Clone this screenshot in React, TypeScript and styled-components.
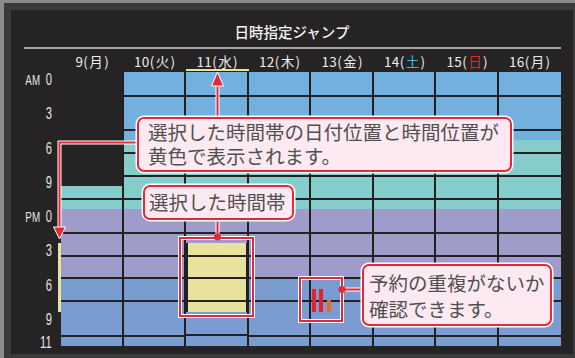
import styled, { createGlobalStyle } from 'styled-components';

const HOUR = 274 / 24;
const LINES = [2, 5, 7, 9, 11, 14, 16, 18, 20, 23];
const SELECTED = 2;

const RED = '#e5283a';
const BLUE = '#72b0df';
const TEAL = '#84cdca';
const PURPLE = '#9f9ccb';
const NAVY = '#7a9cd0';
const YELLOW = '#e9e29d';
const DARK = '#252324';

const days = [
  { day: '9', week: '月' },
  { day: '10', week: '火' },
  { day: '11', week: '水' },
  { day: '12', week: '木' },
  { day: '13', week: '金' },
  { day: '14', week: '土', tone: '#45b6e8' },
  { day: '15', week: '日', tone: '#e3232b' },
  { day: '16', week: '月' },
];

const labels = [
  { h: 0, ampm: 'AM', n: '0' },
  { h: 3, n: '3' },
  { h: 6, n: '6' },
  { h: 9, n: '9' },
  { h: 12, ampm: 'PM', n: '0' },
  { h: 15, n: '3' },
  { h: 18, n: '6' },
  { h: 21, n: '9' },
  { h: 23, n: '11' },
];

type Seg = { from: number; to: number; color: string; line: boolean; selected: boolean };

const bandColor = (h: number) => (h < 6 ? BLUE : h < 12 ? TEAL : h < 18 ? PURPLE : NAVY);

// 列ごとに色の境目と番組の区切り線で分割する
const segmentsFor = (col: number): Seg[] => {
  const cuts = new Set([0, 6, 12, 18, 24, ...LINES]);
  if (col === 0) cuts.add(10);
  if (col === SELECTED) {
    cuts.add(15);
    cuts.add(21);
  }
  const sorted = [...cuts].sort((a, b) => a - b);
  const segs: Seg[] = [];
  for (let i = 0; i < sorted.length - 1; i++) {
    const from = sorted[i];
    const past = col === 0 && from < 10;
    const selected = col === SELECTED && from >= 15 && from < 21;
    segs.push({
      from,
      to: sorted[i + 1],
      color: past ? DARK : selected ? YELLOW : bandColor(from),
      line: !past && LINES.includes(from),
      selected,
    });
  }
  return segs;
};

const App = () => {
  return (
    <Screen>
      <GlobalStyle />
      <Frame>
        <Panel>
          <Title>日時指定ジャンプ</Title>
          <TitleRule />
          <DateRow>
            {days.map((d, i) => (
              <DateCell key={d.day} $selected={i === SELECTED}>
                {d.day}(<Week $tone={d.tone}>{d.week}</Week>)
              </DateCell>
            ))}
          </DateRow>
          <Body>
            <LabelColumn>
              {labels.map((l, i) => {
                const next = labels[i + 1] ? labels[i + 1].h : 24;
                return (
                  <TimeLabel key={l.h} $hours={next - l.h}>
                    <TimeText>
                      {l.ampm && <AmPm>{l.ampm}</AmPm>}
                      {l.n}
                    </TimeText>
                  </TimeLabel>
                );
              })}
            </LabelColumn>
            <Rail>
              <RailGap $hours={15} />
              <RailMark $hours={6} />
            </Rail>
            <Grid>
              {days.map((d, i) => (
                <Column key={d.day} $last={i === days.length - 1}>
                  {segmentsFor(i).map(s => (
                    <Segment
                      key={s.from}
                      $hours={s.to - s.from}
                      $color={s.color}
                      $line={s.line}
                      $selected={s.selected}
                    />
                  ))}
                </Column>
              ))}
            </Grid>
          </Body>
        </Panel>
      </Frame>

      <SelectionBox />
      <IconBox>
        <svg width="40" height="41" viewBox="0 0 40 41">
          <rect x="11" y="10" width="4" height="23" fill="#e8202a" />
          <rect x="18" y="10" width="4" height="23" fill="#e8202a" />
          <rect x="26" y="21" width="4" height="12" fill="#f26522" />
        </svg>
      </IconBox>

      <Arrows width="575" height="358" viewBox="0 0 575 358">
        <g fill="none" stroke="#fff" strokeWidth="4" strokeLinejoin="miter">
          <path d="M217.5 118 V84" />
          <path d="M138 142.5 H59.5 V228" />
          <path d="M217.5 219 V236" />
          <path d="M343 289.5 H363" />
        </g>
        <g fill="none" stroke={RED} strokeWidth="2" strokeLinejoin="miter">
          <path d="M217.5 118 V84" />
          <path d="M138 142.5 H59.5 V228" />
          <path d="M217.5 219 V236" />
          <path d="M343 289.5 H363" />
        </g>
        <polygon points="211.5,86 223.5,86 217.5,72" fill={RED} stroke="#fff" strokeWidth="1" />
        <polygon points="53.5,227 65.5,227 59.5,239" fill={RED} stroke="#fff" strokeWidth="1" />
        <circle cx="217.5" cy="237" r="3.5" fill={RED} />
        <circle cx="342" cy="289.5" r="3.5" fill={RED} />
      </Arrows>

      <DateCallout>
        選択した時間帯の日付位置と時間位置が
        <br />
        黄色で表示されます。
      </DateCallout>
      <RangeCallout>選択した時間帯</RangeCallout>
      <OverlapCallout>
        予約の重複がないか
        <br />
        確認できます。
      </OverlapCallout>
    </Screen>
  );
};

const GlobalStyle = createGlobalStyle`
  body {
    margin: 0;
    background: #fff;
  }
`;

const Screen = styled.div`
  position: relative;
  width: 575px;
  height: 358px;
  overflow: hidden;
  font-family: 'Noto Sans CJK JP', 'Noto Sans', sans-serif;
`;

const Frame = styled.div`
  box-sizing: border-box;
  width: 575px;
  height: 358px;
  border-top: 3px solid #8b8b8b;
  border-left: 4px solid #8b8b8b;
  padding: 7px 2px 4px 7px;
  background: #3a3a3a;
`;

const Panel = styled.div`
  display: flex;
  flex-direction: column;
  height: 100%;
  background: ${DARK};
`;

const Title = styled.h1`
  box-sizing: border-box;
  margin: 0;
  padding-top: 12px;
  height: 37px;
  color: #f2f2f2;
  font-size: 14.5px;
  font-weight: 500;
  line-height: 20px;
  text-align: center;
`;

const TitleRule = styled.div`
  flex: none;
  margin: 0 12px 0 13px;
  height: 2px;
  background: #a3a3a3;
`;

const DateRow = styled.div`
  display: flex;
  padding-left: 50px;
  height: 23px;
`;

const DateCell = styled.div<{ $selected?: boolean }>`
  box-sizing: border-box;
  padding-top: 2px;
  width: 62.5px;
  height: 22px;
  border-bottom: 2px solid ${p => (p.$selected ? '#ebe39a' : 'transparent')};
  color: #ececec;
  font-size: 13.5px;
  line-height: 20px;
  letter-spacing: 0.4px;
  text-align: center;
`;

const Week = styled.span<{ $tone?: string }>`
  margin: 0 1px;
  color: ${p => p.$tone ?? 'inherit'};
`;

const Body = styled.div`
  display: flex;
  height: 274px;
`;

const LabelColumn = styled.div`
  display: flex;
  flex-direction: column;
  width: 47px;
`;

const TimeLabel = styled.div<{ $hours: number }>`
  display: flex;
  justify-content: flex-end;
  flex: none;
  padding-right: 6px;
  height: ${p => p.$hours * HOUR}px;
`;

const TimeText = styled.div`
  margin-top: 1px;
  color: #e4e4e4;
  font-family: 'Liberation Sans', sans-serif;
  font-size: 16px;
  line-height: 14px;
  white-space: nowrap;
  transform: scaleX(0.7);
  transform-origin: right center;
`;

const AmPm = styled.span`
  margin-right: 8px;
  font-size: 14px;
`;

const Rail = styled.div`
  display: flex;
  flex-direction: column;
  width: 3px;
`;

const RailGap = styled.div<{ $hours: number }>`
  flex: none;
  height: ${p => p.$hours * HOUR}px;
`;

const RailMark = styled(RailGap)`
  background: ${YELLOW};
`;

const Grid = styled.div`
  display: flex;
  width: 500px;
`;

const Column = styled.div<{ $last?: boolean }>`
  display: flex;
  flex-direction: column;
  box-sizing: border-box;
  width: 62.5px;
  border-right: ${p => (p.$last ? 'none' : '2px solid #231f20')};
`;

const Segment = styled.div<{ $hours: number; $color: string; $line: boolean; $selected: boolean }>`
  flex: none;
  box-sizing: border-box;
  height: ${p => p.$hours * HOUR}px;
  border-top: ${p => (p.$line ? '2px solid #262223' : 'none')};
  background: ${p => p.$color};
  box-shadow: ${p => (p.$selected ? 'inset 2px 0 #231f20, inset -1px 0 #231f20' : 'none')};
`;

const RedBox = styled.div`
  position: absolute;
  box-sizing: border-box;
  border: 2.5px solid ${RED};
  box-shadow: 0 0 0 1px #fff, inset 0 0 0 1px #fff;
`;

const SelectionBox = styled(RedBox)`
  left: 179px;
  top: 237px;
  width: 75px;
  height: 80px;
`;

const IconBox = styled(RedBox)`
  left: 299px;
  top: 277px;
  width: 44px;
  height: 45px;
  border-width: 2px;

  svg {
    display: block;
  }
`;

const Arrows = styled.svg`
  position: absolute;
  top: 0;
  left: 0;
  pointer-events: none;
`;

const Callout = styled.div`
  position: absolute;
  box-sizing: border-box;
  border: 2px solid ${RED};
  border-radius: 7px;
  box-shadow: 0 0 0 1.5px #fff;
  background: #fde9f1;
  color: #505050;
  font-size: 19.5px;
  line-height: 24px;
  white-space: nowrap;
`;

const DateCallout = styled(Callout)`
  left: 137px;
  top: 117px;
  padding: 1px 0 0 9px;
  width: 375px;
  height: 55px;
`;

const RangeCallout = styled(Callout)`
  left: 143px;
  top: 185px;
  padding: 3px 0 0 4px;
  width: 151px;
  height: 35px;
`;

const OverlapCallout = styled(Callout)`
  left: 362px;
  top: 264px;
  padding: 4px 0 0 5px;
  width: 190px;
  height: 62px;
  line-height: 26px;
`;

export default App;
